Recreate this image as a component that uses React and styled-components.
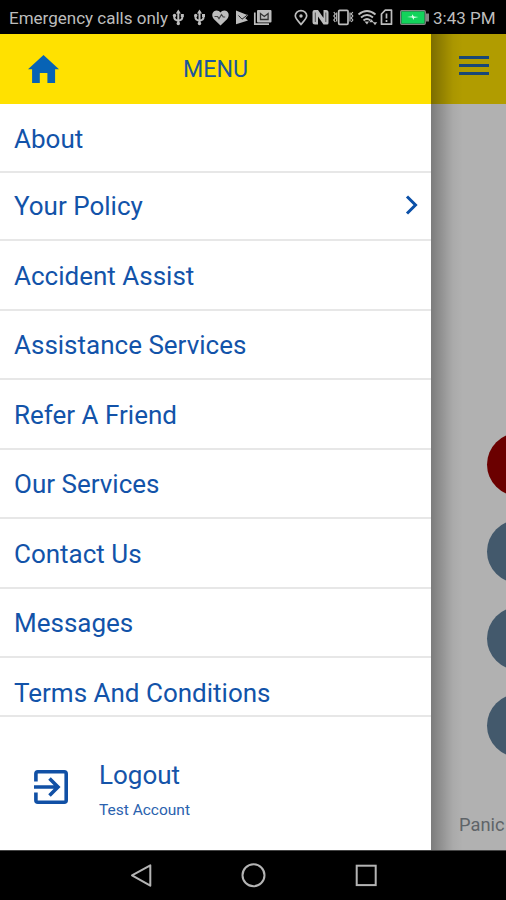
import styled, { createGlobalStyle } from "styled-components";

const menuItems = [
  { title: "About", height: 69 },
  { title: "Your Policy", height: 68, expandable: true },
  { title: "Accident Assist" },
  { title: "Assistance Services" },
  { title: "Refer A Friend" },
  { title: "Our Services" },
  { title: "Contact Us" },
  { title: "Messages" },
  { title: "Terms And Conditions" },
];

function StatusBar() {
  return (
    <StyledStatusBar>
      <StatusText $width={160}>Emergency calls only</StatusText>
      <NotificationIcons />
      <SystemIcons />
      <StatusText $width={62}>3:43 PM</StatusText>
    </StyledStatusBar>
  );
}

function UsbIcon({ x }) {
  return (
    <g transform={`translate(${x} 9.500)`}>
      <path
        d="M5.500 2v12M1.500 6v2.200q0 2 4 3.200M9.500 5.500v2.700q0 2-4 3.200"
        fill="none"
        stroke="#bdbdbd"
        strokeWidth="2"
      />
      <path d="M5.500 0 8 4H3z" />
      <circle cx="1.700" cy="6" r="1.700" />
      <path d="M8 4.500h3v3H8z" />
      <circle cx="5.500" cy="14" r="1.700" />
    </g>
  );
}

function NotificationIcons() {
  return (
    <StatusSvg width="102" height="34" viewBox="171 0 102 34" fill="#bdbdbd">
      <UsbIcon x={172.8} />
      <UsbIcon x={194} />
      <path d="M220.500 25.500 214 19.200c-3.500-4-1.200-8.700 2.600-8.700 1.800 0 3 .8 3.900 2 .9-1.200 2.100-2 3.900-2 3.800 0 6.100 4.700 2.600 8.700z" />
      <path
        d="M214.500 16.500h3l1.500 2.200 2.500-4.200 1.700 2.500h2"
        fill="none"
        stroke="#444"
        strokeWidth="1.200"
      />
      <path d="M236 10.500v13.800l12-3.800-2.700-2.200 3-3.300-2.300-.5z" />
      <path
        d="m238.500 15.500 3.500 3.700 6-4.700"
        fill="none"
        stroke="#222"
        strokeWidth="1"
      />
      <path
        d="M254.800 12.500v11.700H269"
        fill="none"
        stroke="#bdbdbd"
        strokeWidth="1.700"
      />
      <rect x="257" y="10" width="14.500" height="12.500" rx="1" />
      <path
        d="M260.500 19.500v-6l3.800 3 3.800-3v6z"
        fill="none"
        stroke="#333"
        strokeWidth="1.300"
      />
    </StatusSvg>
  );
}

function SystemIcons() {
  return (
    <StatusSvg
      width="141"
      height="34"
      viewBox="292 0 141 34"
      fill="none"
      stroke="#bdbdbd"
      strokeWidth="1.700"
      $gap={19}
    >
      <path d="M301 24.500c-3.200-3.700-5.700-6.200-5.700-8.700a5.700 5.200 0 0 1 11.400 0c0 2.500-2.500 5-5.700 8.700z" />
      <circle cx="301" cy="16" r="1.700" fill="#bdbdbd" stroke="none" />
      <path
        d="M318 24.500h-3q-2.500 0-2.500-2.500V12q0-2 2-2h3.500l5.500 8v-8h2.500q2.500 0 2.500 2.500V23q0 1.500-1.500 1.500h-3.500L318 16.500z"
        fill="#bdbdbd"
        stroke="none"
      />
      <path d="M315.300 12.500v9.500M325.800 12.500v9.500" stroke="#333" strokeWidth=".8" />
      <rect x="338.700" y="10.300" width="9.300" height="14" rx="1" />
      <path
        d="m333.800 12 1.500 2-1.500 2 1.500 2-1.500 2 1.500 2M336.700 12.500v9M350 12.500v9M352.800 12l-1.500 2 1.500 2-1.500 2 1.500 2-1.500 2"
        strokeWidth="1.200"
      />
      <path
        d="M358.500 14.500q8.500-7 17 0M361 17.500q6-5 12 0M363.500 20.500q3.500-3 7 0"
        strokeWidth="1.900"
      />
      <path
        d="m364.500 21.500 2.500 3 2-3zM371.500 19.200l2.200 3h-4.400zM375 25.200l-2.200-3h4.400z"
        fill="#bdbdbd"
        stroke="none"
      />
      <path d="M381.500 14l3.800-3.800h6.200v14h-10z" strokeLinejoin="round" />
      <path d="M386.500 13.500v5M386.500 20v2" />
      <rect x="400.700" y="10.700" width="24.500" height="13.600" rx="1" stroke="#858585" strokeWidth="1.400" />
      <rect x="401.400" y="11.400" width="23.100" height="12.200" fill="#12d35b" stroke="none" />
      <path d="M426 13.500h3v8h-3z" fill="#858585" stroke="none" />
      <path d="m407 17 5-.800v-2l2 2.400 4.500.400-4.500.900v2l-2-2.400z" fill="#d9ffe7" stroke="none" />
    </StatusSvg>
  );
}

function MenuHeader() {
  return (
    <StyledMenuHeader>
      <HomeIcon viewBox="0 0 31 28">
        <path d="M15.500 0 31 14.200h-3.900V28h-7.700V18h-7.600v10H4.100V14.200H0z" fill="#0763b5" />
      </HomeIcon>
      <MenuTitle>MENU</MenuTitle>
    </StyledMenuHeader>
  );
}

function MenuRow({ item }) {
  return (
    <StyledMenuRow $height={item.height}>
      <MenuLabel $lift={item.expandable}>{item.title}</MenuLabel>
      {item.expandable && (
        <Chevron viewBox="0 0 14 20">
          <path d="m2 1.500 8.500 8.500L2 18.500" fill="none" stroke="#0b50a8" strokeWidth="3" />
        </Chevron>
      )}
    </StyledMenuRow>
  );
}

function Logout() {
  return (
    <StyledLogout>
      <LogoutIcon viewBox="0 0 34 34" fill="none" stroke="#1150a5" strokeWidth="3.600">
        <path d="M1.900 11.500V3.800q0-2 2-2h26.300q2 0 2 2v26.400q0 2-2 2H3.900q-2 0-2-2v-7.700" />
        <path d="M0 17h23M15.500 8.500 24 17l-8.500 8.500" />
      </LogoutIcon>
      <div>
        <LogoutTitle>Logout</LogoutTitle>
        <AccountName>Test Account</AccountName>
      </div>
    </StyledLogout>
  );
}

function HomePage() {
  return (
    <StyledPage>
      <PageHeader>
        <Burger>
          <BurgerLine />
          <BurgerLine />
          <BurgerLine />
        </Burger>
      </PageHeader>
      <PageActions>
        <ActionButton $color="#6b0000" />
        <ActionButton $color="#43596c" />
        <ActionButton $color="#43596c" />
        <ActionButton $color="#43596c" />
        <PanicText>Panic</PanicText>
      </PageActions>
    </StyledPage>
  );
}

function NavigationBar() {
  return (
    <StyledNavigationBar>
      <svg width="250" height="30" viewBox="128 860 250 30" fill="none" stroke="#b4b4b4" strokeWidth="2">
        <path d="M150.300 865.300v20.400L132 875.300z" strokeLinejoin="round" />
        <circle cx="253.500" cy="875.200" r="11" />
        <rect x="356.700" y="865.700" width="19" height="19.400" />
      </svg>
    </StyledNavigationBar>
  );
}

function App() {
  return (
    <>
      <GlobalStyle />
      <Screen>
        <StatusBar />
        <Content>
          <Drawer>
            <MenuHeader />
            <MenuList>
              {menuItems.map((item) => (
                <MenuRow key={item.title} item={item} />
              ))}
            </MenuList>
            <Logout />
          </Drawer>
          <HomePage />
        </Content>
        <NavigationBar />
      </Screen>
    </>
  );
}

export default App;

const GlobalStyle = createGlobalStyle`
  * {
    box-sizing: border-box;
  }
  body {
    margin: 0;
    background: #000;
    font-family: Roboto, "Liberation Sans", sans-serif;
  }
`;

const Screen = styled.div`
  display: flex;
  flex-direction: column;
  width: 506px;
  height: 900px;
  overflow: hidden;
`;

const StyledStatusBar = styled.div`
  display: flex;
  align-items: center;
  height: 34px;
  padding-left: 9px;
  background: #000;
`;

const StatusText = styled.span`
  flex: none;
  width: ${({ $width }) => $width}px;
  padding-top: 2px;
  color: #bdbdbd;
  font-size: 17px;
  line-height: 20px;
  white-space: nowrap;
`;

const StatusSvg = styled.svg`
  flex: none;
  margin-left: ${({ $gap }) => $gap || 2}px;
`;

const Content = styled.div`
  display: flex;
  height: 816px;
`;

const Drawer = styled.aside`
  display: flex;
  flex: none;
  flex-direction: column;
  width: 431px;
  background: #fff;
`;

const StyledMenuHeader = styled.header`
  display: flex;
  flex: none;
  align-items: center;
  height: 70px;
  padding-left: 28px;
  background: #ffe100;
`;

const HomeIcon = styled.svg`
  width: 31px;
  height: 28px;
`;

const MenuTitle = styled.h1`
  margin: 0 0 0 124px;
  color: #1b569c;
  font-size: 23.2px;
  font-weight: 400;
  line-height: 28px;
`;

const MenuList = styled.nav`
  flex: none;
  height: 613px;
  overflow: hidden;
  border-bottom: 2px solid #e7e7e7;
`;

const StyledMenuRow = styled.div`
  display: flex;
  align-items: center;
  justify-content: space-between;
  height: ${({ $height }) => $height || 69.5}px;
  padding: 0 12px 0 14px;
  border-bottom: 2px solid #e7e7e7;
`;

const MenuLabel = styled.span`
  padding-top: ${({ $lift }) => ($lift ? 0 : 2)}px;
  color: #1253a9;
  font-size: 26px;
  line-height: 30px;
`;

const Chevron = styled.svg`
  width: 14px;
  height: 20px;
  margin-bottom: 2px;
`;

const StyledLogout = styled.div`
  display: flex;
  flex: 1;
  padding: 43px 0 0 34px;
`;

const LogoutIcon = styled.svg`
  width: 34px;
  height: 34px;
  margin: 10px 31px 0 0;
`;

const LogoutTitle = styled.div`
  color: #1554a9;
  font-size: 26px;
  line-height: 30px;
`;

const AccountName = styled.div`
  margin-top: 10px;
  color: #2a62ae;
  font-size: 15.5px;
  line-height: 20px;
`;

const StyledPage = styled.main`
  flex: 1;
  overflow: hidden;
  background:
    linear-gradient(90deg, rgba(0, 0, 0, 0.3), rgba(0, 0, 0, 0.18) 10px, rgba(0, 0, 0, 0.04) 22px, transparent 32px),
    linear-gradient(#b19c00 70px, #b1b1b1 70px);
`;

const PageHeader = styled.div`
  height: 70px;
  padding: 22px 0 0 28px;
`;

const Burger = styled.div`
  display: flex;
  flex-direction: column;
  gap: 5px;
`;

const BurgerLine = styled.span`
  width: 30px;
  height: 3px;
  background: #194777;
`;

const PageActions = styled.div`
  display: flex;
  flex-direction: column;
  gap: 24px;
  padding: 329px 0 0 56px;
`;

const ActionButton = styled.div`
  width: 63px;
  height: 63px;
  border-radius: 50%;
  background: ${({ $color }) => $color};
`;

const PanicText = styled.span`
  margin: 33px 0 0 -28px;
  color: #5f6468;
  font-size: 18.3px;
  line-height: 22px;
`;

const StyledNavigationBar = styled.div`
  display: flex;
  align-items: center;
  justify-content: center;
  height: 50px;
  padding-bottom: 1px;
  background: #000;
  border-top: 1px solid #454545;
`;
